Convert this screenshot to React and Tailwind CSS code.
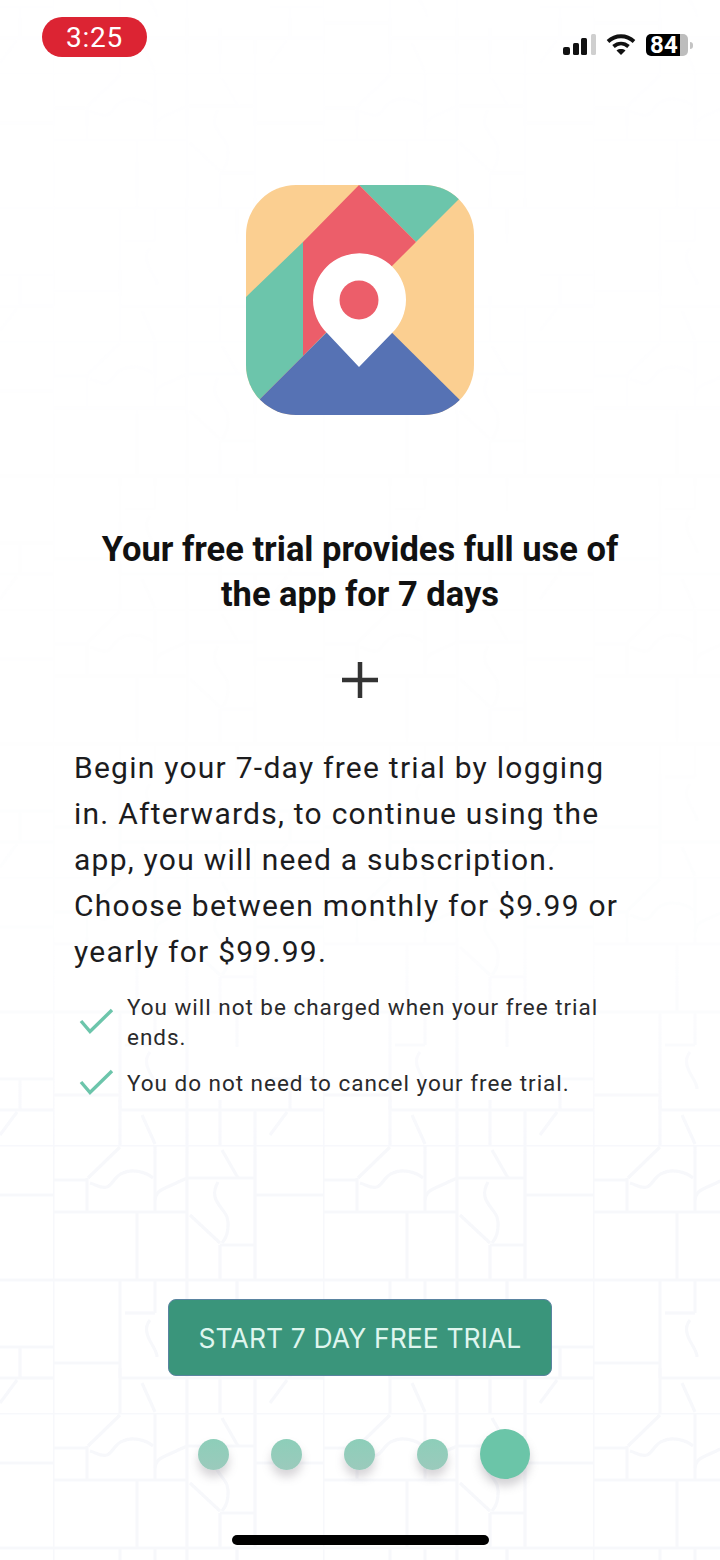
const TILE_LINES = [
  "M0 0V268", "M0 0H270", "M134 0V268", "M0 135H270", "M102 0V67", "M0 67H134", "M84 67V135",
  "M34 33V67", "M0 35H34", "M67 2L35 33", "M37 38C44 40 48 44 54 42C60 40 62 30 70 28C78 24 92 26 100 33",
  "M102 55C103 48 106 46 110 44L134 33", "M202 0V135", "M134 33H202", "M169 5L185 33", "M202 50H270",
  "M165 37C162 42 161 47 162 52C164 60 172 66 174 72C176 78 176 90 169 98", "M137 70L167 98", "M167 100H202",
  "M167 100V135", "M67 135V233", "M67 223V268", "M0 218H67", "M217 202H270", "M237 202V233", "M67 233H270",
  "M237 233H270", "M234 235L217 258", "M89 238L102 267", "M102 135V168", "M72 168H102",
  "M97 175C93 180 93 184 94 188C96 198 104 204 104 212", "M184 135V170", "M167 223V268", "M202 233V268",
];

const SMALL_DOT = "w-[31px] h-[31px] rounded-full bg-[linear-gradient(to_bottom,#8dceb9,#9bcabc)] shadow-[0_7px_10px_rgba(110,105,115,0.28)]";

const Check = () => (
  <svg width="36" height="28" viewBox="0 0 36 28" className="shrink-0" fill="none">
    <path d="M3 13L12 23.5L34 2" stroke="#6cc5ab" strokeWidth="3.4" />
  </svg>
);

const Logo = () => (
  <svg width="228" height="230" viewBox="0 0 228 230">
    <defs>
      <clipPath id="logo-clip">
        <rect width="228" height="230" rx="50" />
      </clipPath>
    </defs>
    <g clipPath="url(#logo-clip)">
      <rect width="228" height="230" fill="#fbcf91" />
      <path d="M113 0L170 57L232 -5H113Z" fill="#6cc5ab" />
      <path d="M57 57L113 0L170 57L100 127L57 171Z" fill="#ec5e6a" />
      <path d="M0 112L57 57V171L-3 231H0Z" fill="#6cc5ab" />
      <path d="M113 115L-3 231H230Z" fill="#5672b4" />
      <path d="M113 182L81 148A46.5 46.5 0 1 1 146 148Z" fill="#fff" />
      <circle cx="113" cy="115" r="19.5" fill="#ec5e6a" />
    </g>
  </svg>
);

const App = () => {
  return (
    <div className="relative w-[720px] h-[1560px] overflow-hidden bg-white font-['Roboto',sans-serif] text-[#1c1c1e]">
      {/* faint street map behind everything, fades out towards the top */}
      <svg
        width="720"
        height="1560"
        className="absolute inset-0 [mask-image:linear-gradient(to_bottom,rgba(0,0,0,0.08)_0%,rgba(0,0,0,0.18)_60%,rgba(0,0,0,0.9)_74%)]"
      >
        <defs>
          <pattern id="streets" width="270" height="268" patternUnits="userSpaceOnUse" patternTransform="translate(53 1145)">
            {TILE_LINES.map((d) => (
              <path key={d} d={d} fill="none" stroke="#f6f7fb" strokeWidth="3.2" />
            ))}
          </pattern>
        </defs>
        <rect width="720" height="1560" fill="url(#streets)" />
      </svg>

      <div className="relative flex flex-col h-full">
        <div className="flex items-start justify-between pt-[17px] pl-[42px] pr-[27px]">
          <div className="w-[105px] h-[40px] pt-[1px] rounded-[20px] bg-[#dc2433] flex items-center justify-center text-white text-[28px] tracking-[0.7px]">
            3:25
          </div>
          <div className="flex items-center mt-[16px] h-[24px]">
            <svg width="34" height="22" viewBox="0 0 34 22">
              <rect x="0" y="13" width="7" height="8" rx="2" fill="#111" />
              <rect x="10" y="9" width="6" height="12" rx="1.5" fill="#111" />
              <rect x="18" y="4" width="6" height="17" rx="1.5" fill="#111" />
              <rect x="28" y="0" width="5" height="21" rx="1.5" fill="#cfcfcf" />
            </svg>
            <svg width="30" height="22" viewBox="0 0 30 22" className="ml-[9px]">
              <path d="M2 7.5C9.5 0.5 20.5 0.5 28 7.5" fill="none" stroke="#111" strokeWidth="3.8" />
              <path d="M7.5 12.5C12 8.6 18 8.6 22.5 12.5" fill="none" stroke="#111" strokeWidth="3.8" />
              <path d="M15 21L10.5 16.5C13 14.6 17 14.6 19.500 16.5Z" fill="#111" />
            </svg>
            <div className="ml-[10px] w-[42px] h-[22px] rounded-[5px] bg-[linear-gradient(to_right,#000_0,#000_34px,#bdbdbd_34px)] text-white text-[24px] font-bold leading-[22px] pl-[4px] tracking-[0.3px]">
              84
            </div>
            <div className="ml-[2px] w-[3px] h-[7px] rounded-r-full bg-[#c4c4c4]" />
          </div>
        </div>

        <div className="mt-[128px] flex justify-center">
          <Logo />
        </div>

        <h1 className="mt-[112px] text-center text-[34.5px] leading-[45px] font-bold text-[#111]">
          Your free trial provides full use of
          <br />
          the app for 7 days
        </h1>

        <svg width="36" height="36" viewBox="0 0 36 36" className="mt-[45px] self-center">
          <path d="M18 0V36M0 18H36" stroke="#333" strokeWidth="4.5" />
        </svg>

        <p className="mt-[47px] mx-[74px] text-[30px] leading-[46px] tracking-[1.25px] whitespace-nowrap">
          Begin your 7-day free trial by logging
          <br />
          in. Afterwards, to continue using the
          <br />
          app, you will need a subscription.
          <br />
          Choose between monthly for $9.99 or
          <br />
          yearly for $99.99.
        </p>

        <ul className="mt-[17px] ml-[78px] flex flex-col gap-[16px] text-[22.5px] leading-[30px] tracking-[0.97px] text-[#2a2a2c] whitespace-nowrap">
          <li className="flex items-center gap-[13px]">
            <Check />
            <span>
              You will not be charged when your free trial
              <br />
              ends.
            </span>
          </li>
          <li className="flex items-center gap-[13px]">
            <Check />
            <span>You do not need to cancel your free trial.</span>
          </li>
        </ul>

        <button className="mt-[201px] pt-[2px] self-center w-[384px] h-[77px] rounded-[8px] bg-[#3a957b] border-[1.5px] border-[#5a84a0] text-[#dff5ee] text-[26.5px] tracking-[0.1px] font-['Inter',sans-serif]">
          START 7 DAY FREE TRIAL
        </button>

        <div className="mt-[53px] ml-[198px] flex items-center h-[50px]">
          <div className={SMALL_DOT} />
          <div className={`ml-[42px] ${SMALL_DOT}`} />
          <div className={`ml-[42px] ${SMALL_DOT}`} />
          <div className={`ml-[42px] ${SMALL_DOT}`} />
          <div className="ml-[32px] w-[50px] h-[50px] rounded-full bg-[#6bc5a8] shadow-[0_7px_10px_rgba(110,105,115,0.3)]" />
        </div>

        <div className="mt-[56px] self-center w-[257px] h-[10px] rounded-full bg-black" />
      </div>
    </div>
  );
};

export default App;
